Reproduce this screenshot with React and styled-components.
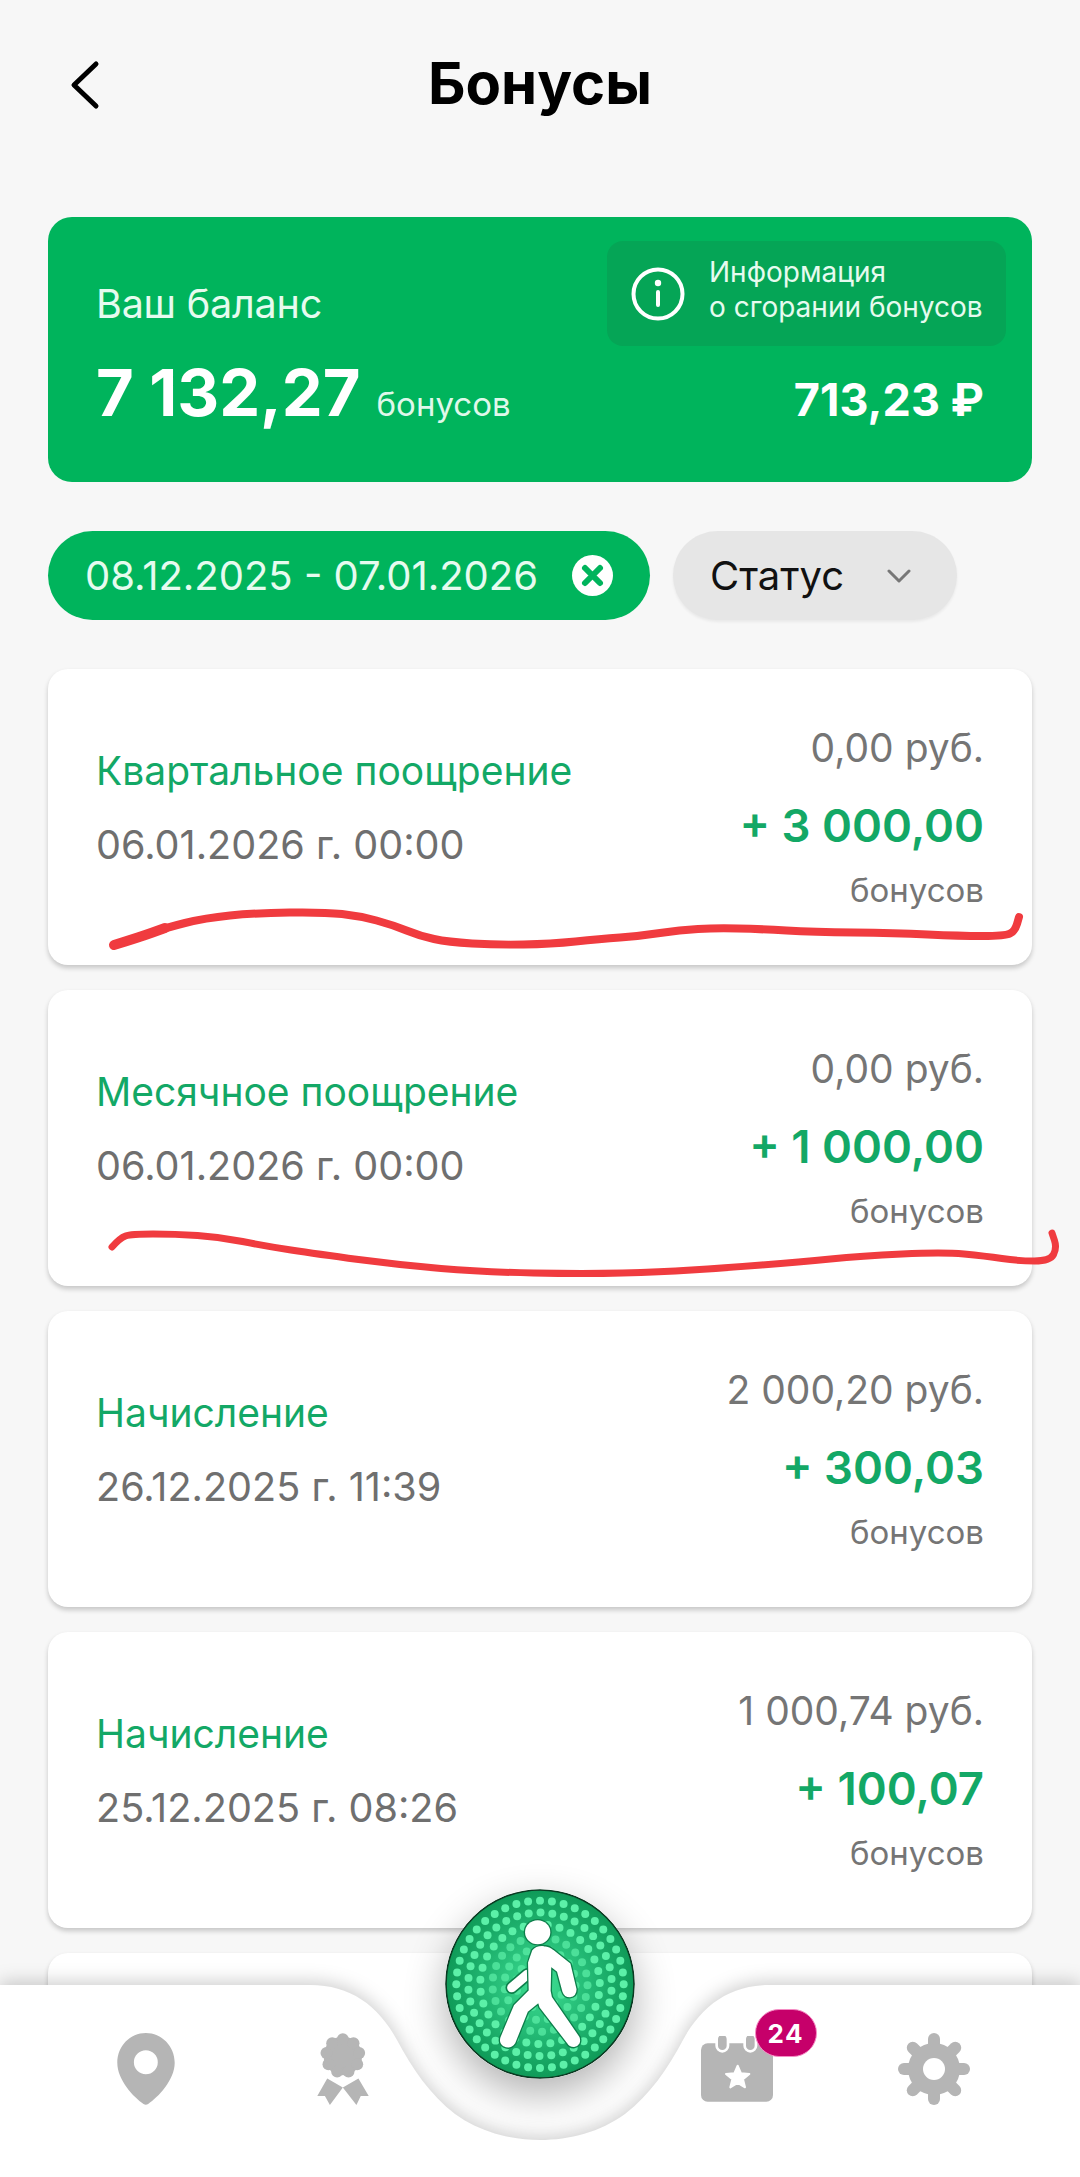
import React from 'react';
import styled, { createGlobalStyle } from 'styled-components';

const GlobalStyle = createGlobalStyle`
  * {
    margin: 0;
    padding: 0;
    box-sizing: border-box;
  }

  body {
    background-color: #f7f7f7;
    font-family: Inter, 'Noto Sans', sans-serif;
  }
`;

const Page = styled.div`
  position: relative;
  width: 1080px;
  height: 2177px;
  overflow: hidden;
  background-color: #f7f7f7;
`;

const Header = styled.header`
  position: relative;
  height: 217px;
  padding-top: 50px;
  text-align: center;
`;

const BackButton = styled.svg`
  position: absolute;
  left: 69px;
  top: 60px;
  width: 32px;
  height: 50px;
`;

const Title = styled.h1`
  font-size: 58px;
  line-height: 66px;
  font-weight: 700;
  color: #000;
`;

const Content = styled.main`
  padding: 0 48px;
`;

const BalanceCard = styled.section`
  position: relative;
  height: 265px;
  padding: 65px 48px 0;
  border-radius: 24px;
  background-color: #00b45c;
  color: #fff;
`;

const BalanceLabel = styled.div`
  font-size: 39.5px;
  line-height: 44px;
  letter-spacing: -0.2px;
  color: #e6fbef;
`;

const BalanceRow = styled.div`
  display: flex;
  align-items: baseline;
  justify-content: space-between;
  margin-top: 29px;
`;

const BalanceValue = styled.div`
  display: flex;
  align-items: baseline;
  gap: 16px;
`;

const BalanceAmount = styled.span`
  font-size: 65px;
  line-height: 76px;
  font-weight: 700;
`;

const BalanceUnit = styled.span`
  font-size: 33px;
  color: #dff8ea;
`;

const BalanceRub = styled.span`
  font-size: 45px;
  font-weight: 700;
`;

const InfoBox = styled.div`
  position: absolute;
  top: 24px;
  right: 26px;
  width: 399px;
  height: 105px;
  display: flex;
  align-items: center;
  gap: 24px;
  padding-left: 24px;
  border-radius: 16px;
  background-color: #05a556;
`;

const InfoText = styled.div`
  padding-bottom: 8px;
  font-size: 28px;
  line-height: 35px;
  color: #e6fbef;
  white-space: nowrap;
`;

const Filters = styled.div`
  display: flex;
  gap: 23px;
  margin-top: 49px;
`;

const DateChip = styled.div`
  width: 602px;
  height: 89px;
  display: flex;
  align-items: center;
  justify-content: space-between;
  padding: 0 37px;
  border-radius: 45px;
  background-color: #00b45c;
  color: #e6fbef;
  font-size: 40px;
`;

const StatusChip = styled.div`
  width: 284px;
  height: 89px;
  display: flex;
  align-items: center;
  justify-content: space-between;
  padding: 0 46px 0 37px;
  border-radius: 45px;
  background-color: #e6e6e6;
  box-shadow: 0 2px 3px rgba(0, 0, 0, 0.06);
  color: #111;
  font-size: 40px;
`;

const List = styled.div`
  display: flex;
  flex-direction: column;
  gap: 25px;
  margin-top: 49px;
`;

const Card = styled.article`
  height: 296px;
  flex-shrink: 0;
  display: flex;
  justify-content: space-between;
  padding: 0 48px;
  border-radius: 20px;
  background-color: #fff;
  box-shadow: 0 3px 5px rgba(0, 0, 0, 0.2);
`;

const CardLeft = styled.div`
  padding-top: 79px;
`;

const CardTitle = styled.div`
  font-size: 39px;
  line-height: 46px;
  color: #13a866;
`;

const CardDate = styled.div`
  margin-top: 28px;
  font-size: 39.6px;
  line-height: 46px;
  color: #6f6f6f;
`;

const CardRight = styled.div`
  padding-top: 56px;
  text-align: right;
`;

const CardSum = styled.div`
  font-size: 39px;
  line-height: 46px;
  color: #757575;
`;

const CardBonus = styled.div`
  margin-top: 28px;
  font-size: 45.5px;
  line-height: 54px;
  font-weight: 600;
  color: #13a866;
`;

const CardUnit = styled.div`
  margin-top: 17px;
  font-size: 33px;
  line-height: 40px;
  color: #757575;
`;

const Scribbles = styled.svg`
  position: absolute;
  left: 0;
  top: 0;
  width: 1080px;
  height: 2177px;
  pointer-events: none;
`;

const NavBar = styled.nav`
  position: absolute;
  left: 0;
  bottom: 0;
  width: 1080px;
  height: 192px;
  display: grid;
  grid-template-columns: repeat(5, 1fr);
  justify-items: center;
  align-items: start;
  padding: 48px 48px 0;
`;

const NavShape = styled.svg`
  position: absolute;
  left: 0;
  top: -20px;
  width: 1080px;
  height: 212px;
  filter: drop-shadow(0 -3px 9px rgba(0, 0, 0, 0.2));
`;

const NavItem = styled.div`
  position: relative;
  height: 72px;
  display: flex;
  align-items: center;
  color: #b5b5b5;
`;

const Badge = styled.span`
  position: absolute;
  left: 54px;
  top: -24px;
  width: 62px;
  height: 48px;
  display: flex;
  align-items: center;
  justify-content: center;
  border: 1px solid #f58cc4;
  border-radius: 24px;
  background-color: #c6006a;
  color: #fff;
  font-size: 26px;
  font-weight: 700;
  letter-spacing: 1.5px;
`;

const LightButton = styled.svg`
  position: absolute;
  left: 445px;
  top: -96px;
  width: 190px;
  height: 190px;
  border-radius: 50%;
  box-shadow: 0 16px 40px rgba(0, 0, 0, 0.3);
`;

const cards = [
  { title: 'Квартальное поощрение', date: '06.01.2026 г. 00:00', sum: '0,00 руб.', bonus: '+ 3 000,00' },
  { title: 'Месячное поощрение', date: '06.01.2026 г. 00:00', sum: '0,00 руб.', bonus: '+ 1 000,00' },
  { title: 'Начисление', date: '26.12.2025 г. 11:39', sum: '2 000,20 руб.', bonus: '+ 300,03' },
  { title: 'Начисление', date: '25.12.2025 г. 08:26', sum: '1 000,74 руб.', bonus: '+ 100,07' },
];

const scribbleOne = [
  [114, 945], [140, 937], [165, 928], [205, 918], [255, 913], [324, 912], [360, 916], [393, 925],
  [420, 936], [448, 942], [496, 945], [551, 944], [600, 939], [640, 936], [680, 930], [716, 928],
  [760, 929], [813, 932], [895, 933], [960, 936], [1005, 936], [1015, 931], [1019, 917],
];

const scribbleTwo = [
  [112, 1247], [120, 1238], [131, 1234], [175, 1234], [220, 1237], [265, 1246], [317, 1254], [400, 1265],
  [482, 1272], [585, 1274], [660, 1272], [723, 1268], [800, 1262], [861, 1256], [943, 1252], [985, 1256],
  [1019, 1261], [1050, 1261], [1057, 1248], [1052, 1233],
];

const figurePath =
  'M340 245Q350 232 372 234Q388 235 398 245L448 285L466 360Q466 378 450 380Q436 380 431 365L415 305L390 285L388 365L392 385L475 505Q482 525 462 530Q450 530 445 520L362 412L357 395L320 425L282 520Q270 537 252 528Q240 520 245 505L285 410L330 365L328 280Z';

// ломаную сглаживаем через середины отрезков
const smoothPath = (points) => {
  let d = `M${points[0][0]} ${points[0][1]}`;
  for (let i = 1; i < points.length - 1; i++) {
    const midX = (points[i][0] + points[i + 1][0]) / 2;
    const midY = (points[i][1] + points[i + 1][1]) / 2;
    d += ` Q${points[i][0]} ${points[i][1]} ${midX} ${midY}`;
  }
  const last = points[points.length - 1];
  return `${d} L${last[0]} ${last[1]}`;
};

const makeDots = () => {
  const dots = [];
  [252, 216, 180, 143, 107, 72].forEach((radius, ring) => {
    const count = Math.round((2 * Math.PI * radius) / 36);
    for (let i = 0; i < count; i++) {
      const angle = (i / count) * 2 * Math.PI + ring * 0.09;
      dots.push(
        <circle
          key={`${ring}-${i}`}
          cx={360 + radius * Math.cos(angle)}
          cy={345 + radius * Math.sin(angle)}
          r="12"
          fill="#5cf0a8"
          opacity={ring < 3 ? 1 : 0.7}
        />
      );
    }
  });
  return dots;
};

const PinIcon = () => (
  <svg width="58" height="72" viewBox="82 68 173 217">
    <path
      fill="currentColor"
      fillRule="evenodd"
      d="M168 68C215 68 255 107 255 158C255 210 205 262 175 282Q168 287 161 282C131 262 82 210 82 158C82 107 121 68 168 68ZM168 120A36 36 0 1 0 168.01 192A36 36 0 1 0 168 120Z"
    />
  </svg>
);

const RosetteIcon = () => {
  const bumps = Array.from({ length: 9 }, (_, i) => {
    const angle = (i / 9) * 2 * Math.PI - Math.PI / 2;
    return [757 + 50 * Math.cos(angle), 137 + 50 * Math.sin(angle)];
  });
  return (
    <svg width="52" height="72" viewBox="680 68 155 217">
      <path
        fill="currentColor"
        d="M710 205L757 232L718 285L703 258L680 258ZM804 205L757 232L798 285L811 258L835 258Z"
      />
      <g fill="#fff" stroke="#fff" strokeWidth="14">
        <circle cx="757" cy="137" r="58" />
        {bumps.map(([x, y]) => (
          <circle key={x} cx={x} cy={y} r="18" />
        ))}
      </g>
      <g fill="currentColor">
        <circle cx="757" cy="137" r="58" />
        {bumps.map(([x, y]) => (
          <circle key={x} cx={x} cy={y} r="18" />
        ))}
      </g>
    </svg>
  );
};

const CalendarIcon = () => (
  <svg width="72" height="66" viewBox="62 108 216 198">
    <rect x="62" y="130" width="216" height="175" rx="20" fill="currentColor" />
    <g fill="currentColor" stroke="#fff" strokeWidth="8">
      <rect x="109" y="100" width="34" height="54" rx="17" />
      <rect x="193" y="100" width="34" height="54" rx="17" />
    </g>
    <path
      fill="#fff"
      stroke="#fff"
      strokeWidth="6"
      strokeLinejoin="round"
      d="M172 197L182 220L207 222L188 238L194 262L172 249L150 262L156 238L137 222L162 220Z"
    />
  </svg>
);

const GearIcon = () => (
  <svg width="72" height="72" viewBox="654 99 216 216">
    <g stroke="currentColor" strokeWidth="36" strokeLinecap="round">
      {[0, 45, 90, 135, 180, 225, 270, 315].map((deg) => (
        <line key={deg} x1="762" y1="207" x2="762" y2="117" transform={`rotate(${deg} 762 207)`} />
      ))}
    </g>
    <circle cx="762" cy="207" r="78" fill="currentColor" />
    <circle cx="762" cy="207" r="33" fill="#fff" />
  </svg>
);

const App = () => {
  return (
    <Page>
      <GlobalStyle />
      <Header>
        <BackButton viewBox="0 0 32 50">
          <path d="M27 4L5 25L27 46" fill="none" stroke="#000" strokeWidth="5" strokeLinecap="round" strokeLinejoin="round" />
        </BackButton>
        <Title>Бонусы</Title>
      </Header>
      <Content>
        <BalanceCard>
          <BalanceLabel>Ваш баланс</BalanceLabel>
          <BalanceRow>
            <BalanceValue>
              <BalanceAmount>7 132,27</BalanceAmount>
              <BalanceUnit>бонусов</BalanceUnit>
            </BalanceValue>
            <BalanceRub>713,23 ₽</BalanceRub>
          </BalanceRow>
          <InfoBox>
            <svg width="54" height="54" viewBox="0 0 54 54">
              <circle cx="27" cy="27" r="24.5" fill="none" stroke="#fff" strokeWidth="4" />
              <circle cx="27" cy="16" r="3.2" fill="#fff" />
              <rect x="25" y="23" width="4" height="17" rx="2" fill="#fff" />
            </svg>
            <InfoText>
              Информация
              <br />о сгорании бонусов
            </InfoText>
          </InfoBox>
        </BalanceCard>
        <Filters>
          <DateChip>
            08.12.2025 - 07.01.2026
            <svg width="41" height="41" viewBox="0 0 41 41">
              <circle cx="20.5" cy="20.5" r="20.5" fill="#fff" />
              <path d="M13 13L28 28M28 13L13 28" stroke="#00b45c" strokeWidth="6" strokeLinecap="round" />
            </svg>
          </DateChip>
          <StatusChip>
            Статус
            <svg width="24" height="14" viewBox="0 0 24 14">
              <path d="M2 2L12 12L22 2" fill="none" stroke="#777" strokeWidth="3" strokeLinecap="round" strokeLinejoin="round" />
            </svg>
          </StatusChip>
        </Filters>
        <List>
          {cards.map((card) => (
            <Card key={card.date}>
              <CardLeft>
                <CardTitle>{card.title}</CardTitle>
                <CardDate>{card.date}</CardDate>
              </CardLeft>
              <CardRight>
                <CardSum>{card.sum}</CardSum>
                <CardBonus>{card.bonus}</CardBonus>
                <CardUnit>бонусов</CardUnit>
              </CardRight>
            </Card>
          ))}
          <Card />
        </List>
      </Content>

      <Scribbles viewBox="0 0 1080 2177">
        <path d={smoothPath(scribbleOne)} fill="none" stroke="#f03b3f" strokeWidth="8" strokeLinecap="round" />
        <path d={smoothPath(scribbleOne.slice(0, 3))} fill="none" stroke="#f03b3f" strokeWidth="10" strokeLinecap="round" />
        <path d={smoothPath(scribbleTwo)} fill="none" stroke="#f03b3f" strokeWidth="7" strokeLinecap="round" />
      </Scribbles>

      <NavBar>
        <NavShape viewBox="0 1965 1080 212">
          <path
            fill="#fff"
            d="M0 1985H310C350 1985 378 2005 397 2040C412 2068 430 2095 455 2114C480 2132 510 2140 540 2140C570 2140 600 2132 625 2114C650 2095 668 2068 683 2040C702 2005 730 1985 770 1985H1080V2177H0Z"
          />
        </NavShape>
        <NavItem>
          <PinIcon />
        </NavItem>
        <NavItem>
          <RosetteIcon />
        </NavItem>
        <div />
        <NavItem>
          <CalendarIcon />
          <Badge>24</Badge>
        </NavItem>
        <NavItem>
          <GearIcon />
        </NavItem>
        <LightButton viewBox="75 58 570 572">
          <defs>
            <radialGradient id="lamp" cx="50%" cy="50%" r="50%">
              <stop offset="0%" stopColor="#3fe094" />
              <stop offset="55%" stopColor="#22b873" />
              <stop offset="100%" stopColor="#0f9a58" />
            </radialGradient>
          </defs>
          <circle cx="360" cy="344" r="283" fill="url(#lamp)" stroke="#0b3a22" strokeWidth="5" />
          {makeDots()}
          <g strokeLinejoin="round" strokeLinecap="round">
            <ellipse cx="353" cy="188" rx="42" ry="40" fill="#0d7f4b" />
            <ellipse cx="353" cy="188" rx="38" ry="36" fill="#fff" />
            <path d="M322 315L275 355" fill="none" stroke="#0d7f4b" strokeWidth="38" />
            <path d="M322 315L275 355" fill="none" stroke="#fff" strokeWidth="28" />
            <path d={figurePath} fill="#0d7f4b" stroke="#0d7f4b" strokeWidth="16" />
            <path d={figurePath} fill="#fff" stroke="#fff" strokeWidth="8" />
          </g>
        </LightButton>
      </NavBar>
    </Page>
  );
};

export default App;
